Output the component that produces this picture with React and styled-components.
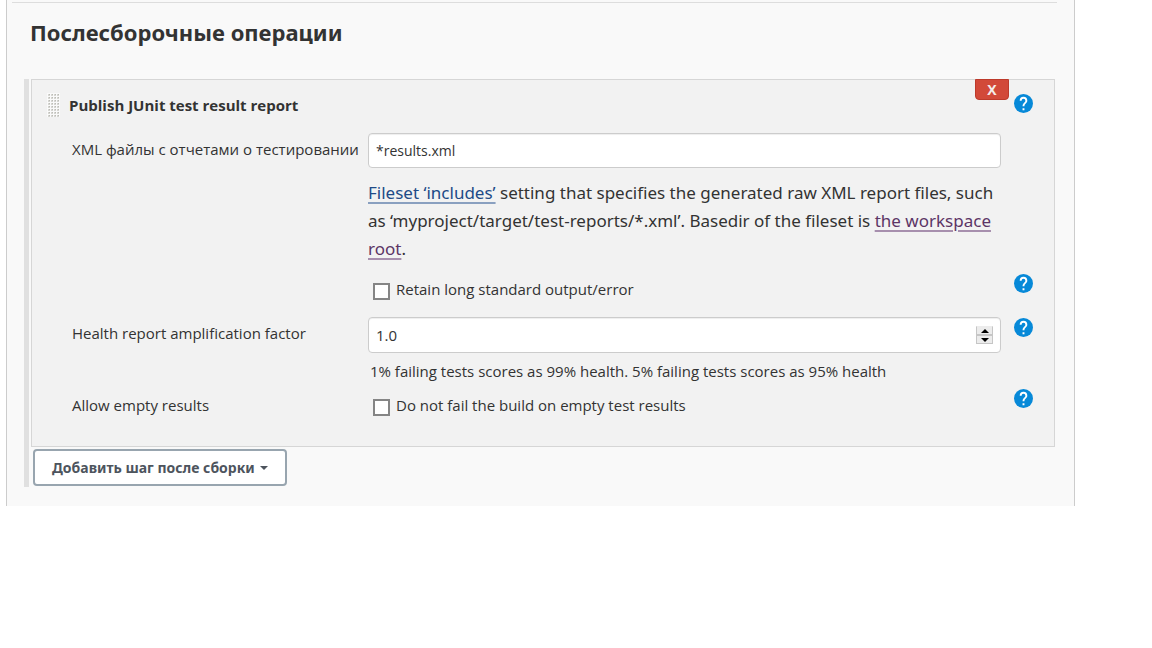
import React, { useRef } from "react";
import styled, { createGlobalStyle } from "styled-components";

const GlobalStyle = createGlobalStyle`
  *, *::before, *::after { box-sizing: border-box; }
  body {
    margin: 0;
    background: #fff;
    color: #333;
    font-family: "Open Sans", "Noto Sans", sans-serif;
    font-size: 15px;
    line-height: 24px;
  }
  button, input { font: inherit; color: inherit; }
`;

const Panel = styled.main`
  margin: 0 77px 0 6px;
  padding: 2px 17px 19px;
  background: #f9f9f9;
  border: solid #ccc;
  border-width: 0 1px;
`;

const Divider = styled.hr`
  margin: 0 0 0 -12px;
  border: 0;
  border-top: 1px solid #ddd;
`;

const SectionTitle = styled.h1`
  margin: 0;
  padding: 13px 6px 31px;
  font-family: "Noto Sans", sans-serif;
  font-size: 22px;
  line-height: 32px;
  font-weight: 700;
`;

const StepList = styled.section`
  margin-right: 2px;
  padding: 0 0 1px 2px;
  border-left: 5px solid #e0e0e0;
`;

const Step = styled.form`
  position: relative;
  padding-bottom: 29px;
  background: #f2f2f2;
  border: 1px solid #d6d6d6;
`;

const StepHeader = styled.header`
  display: flex;
  align-items: flex-start;
  height: 53px;
  padding: 13px 21px 0 15px;
`;

const Grip = styled.svg`
  display: block;
  flex: none;
`;

const StepTitle = styled.h2`
  flex: 1;
  margin: 0 0 0 9px;
  font-size: 15px;
  line-height: 24px;
  font-weight: 700;
`;

const DeleteButton = styled.button`
  position: absolute;
  top: -1px;
  right: 45px;
  width: 34px;
  height: 21px;
  padding: 0;
  background: #d24939;
  border: 1px solid #bd3a2b;
  border-radius: 0 0 4px 4px;
  color: #f5eceb;
  font-size: 14px;
  line-height: 18px;
  font-weight: 700;
`;

const Row = styled.div`
  display: grid;
  grid-template-columns: 296px minmax(0, 1fr) 19px;
  padding: 0 21px 0 40px;
`;

const RowLabel = styled.label`
  padding-top: 4px;
  white-space: nowrap;
`;

const Field = styled.div`
  min-width: 0;
  margin-right: 13px;
`;

const TextInput = styled.input`
  display: block;
  width: 100%;
  height: 35px;
  padding: 0 7px;
  background: #fff;
  border: 1px solid #ccc;
  border-radius: 4px;
  box-shadow: inset 0 1px 1px rgba(0, 0, 0, 0.07);
  outline: none;
  font-size: 14px;
`;

const NumberInput = styled(TextInput)`
  height: 36px;
  font-size: 15px;
  appearance: textfield;
  &::-webkit-inner-spin-button { appearance: none; margin: 0; }
`;

const NumberBox = styled.div`
  position: relative;
`;

const Stepper = styled.div`
  position: absolute;
  top: 9px;
  right: 8px;
  display: flex;
  flex-direction: column;
  width: 17px;
`;

const StepperButton = styled.button`
  display: flex;
  align-items: center;
  justify-content: center;
  height: 9px;
  padding: 0;
  background: #ececec;
  border: 1px solid #c6c6c6;
  svg { display: block; }
  &:first-child { border-top-color: #ececec; }
`;

const HelpText = styled.p`
  margin: 0;
  padding: 11px 0;
  font-family: "Noto Sans", sans-serif;
  font-size: 17px;
  line-height: 28px;
`;

const TextLink = styled.a`
  color: ${(p) => (p.$visited ? "#5c3566" : "#204a87")};
  text-decoration: underline 2px ${(p) => (p.$visited ? "#a78fae" : "#8aa0c0")};
  text-underline-offset: 3px;
`;

const Description = styled.p`
  margin: 0;
  padding: 6px 2px;
`;

const CheckLabel = styled.label`
  display: flex;
  align-items: flex-start;
  gap: 6px;
  padding: ${(p) => p.$top || 4}px 0 ${(p) => p.$bottom || 0}px 5px;
`;

const Checkbox = styled.input`
  appearance: none;
  width: 17px;
  height: 17px;
  margin: 6px 0 0;
  background: #fff;
  border: 2px solid #858585;
  &:checked { background: #0a84d6; }
`;

const HelpButton = styled.button`
  display: block;
  width: 19px;
  height: 19px;
  margin: ${(p) => p.$top || 0}px 0 0;
  padding: 0;
  background: none;
  border: 0;
  svg { display: block; }
`;

const AddButton = styled.button`
  display: flex;
  align-items: center;
  justify-content: center;
  gap: 5px;
  height: 37px;
  margin: 2px 0 0 2px;
  padding: 0 17px;
  background: #fff;
  border: 2px solid #98a5af;
  border-radius: 4px;
  color: #4d545d;
  font-family: "Noto Sans", sans-serif;
  font-size: 14px;
  font-weight: 700;
`;

function Help({ topic, top }) {
  return (
    <HelpButton type="button" aria-label={`Help: ${topic}`} $top={top}>
      <svg width="19" height="19" viewBox="2 2 20 20">
        <path
          fill="#0789d8"
          d="M12 2a10 10 0 1 0 0 20 10 10 0 0 0 0-20z"
        />
        <path
          fill="#fff"
          d="M13 19h-2v-2h2v2zm2.07-7.75-.9.92C13.45 12.9 13 13.5 13 15h-2v-.5c0-1.1.45-2.1 1.17-2.83l1.24-1.26c.37-.36.59-.86.59-1.41a2 2 0 0 0-4 0H8a4 4 0 0 1 8 0c0 .88-.36 1.68-.93 2.25z"
        />
      </svg>
    </HelpButton>
  );
}

function DragGrip() {
  const dots = [];
  for (let y = 1; y < 24; y += 3)
    for (let x = 1; x < 12; x += 3)
      dots.push(
        <g key={`${x}-${y}`}>
          <rect x={x} y={y} width="2" height="2" fill="#d6d6d2" />
          <rect x={x + 1} y={y} width="1" height="1" fill="#bcbcb6" />
        </g>
      );
  return (
    <Grip width="13" height="24" viewBox="0 0 13 24" aria-hidden="true">
      <rect width="13" height="24" fill="#fafafa" />
      {dots}
    </Grip>
  );
}

export default function App() {
  const factor = useRef(null);
  return (
    <>
      <GlobalStyle />
      <Panel>
        <Divider />
        <SectionTitle>Послесборочные операции</SectionTitle>
        <StepList>
          <Step onSubmit={(e) => e.preventDefault()}>
            <StepHeader>
              <DragGrip />
              <StepTitle>Publish JUnit test result report</StepTitle>
              <Help topic="Publish JUnit test result report" top={1} />
            </StepHeader>
            <DeleteButton type="button">X</DeleteButton>

            <Row>
              <RowLabel htmlFor="xml">XML файлы с отчетами о тестировании</RowLabel>
              <Field>
                <TextInput id="xml" type="text" defaultValue="*results.xml" />
                <HelpText>
                  <TextLink href="#includes">Fileset ‘includes’</TextLink> setting that
                  specifies the generated raw XML report files, such as
                  ‘myproject/target/test-reports/*.xml’. Basedir of the fileset is{" "}
                  <TextLink href="#workspace" $visited>the workspace root</TextLink>.
                </HelpText>
              </Field>
            </Row>

            <Row>
              <span />
              <Field>
                <CheckLabel $top={3} $bottom={16}>
                  <Checkbox type="checkbox" />
                  Retain long standard output/error
                </CheckLabel>
              </Field>
              <Help topic="Retain long standard output/error" />
            </Row>

            <Row>
              <RowLabel htmlFor="factor">Health report amplification factor</RowLabel>
              <Field>
                <NumberBox>
                  <NumberInput
                    id="factor"
                    ref={factor}
                    type="number"
                    step="0.1"
                    defaultValue="1.0"
                  />
                  <Stepper>
                    <StepperButton
                      type="button"
                      aria-label="Increase"
                      onClick={() => factor.current.stepUp()}
                    >
                      <svg width="8" height="4" viewBox="0 0 8 4"><path d="M0 4 4 0l4 4z" /></svg>
                    </StepperButton>
                    <StepperButton
                      type="button"
                      aria-label="Decrease"
                      onClick={() => factor.current.stepDown()}
                    >
                      <svg width="8" height="4" viewBox="0 0 8 4"><path d="M0 0h8L4 4z" /></svg>
                    </StepperButton>
                  </Stepper>
                </NumberBox>
                <Description>
                  1% failing tests scores as 99% health. 5% failing tests scores as 95% health
                </Description>
              </Field>
              <Help topic="Health report amplification factor" top={1} />
            </Row>

            <Row>
              <RowLabel htmlFor="empty">Allow empty results</RowLabel>
              <Field>
                <CheckLabel>
                  <Checkbox id="empty" type="checkbox" />
                  Do not fail the build on empty test results
                </CheckLabel>
              </Field>
              <Help topic="Allow empty results" />
            </Row>
          </Step>

          <AddButton type="button">
            Добавить шаг после сборки
            <svg width="8" height="4" viewBox="0 0 8 4" aria-hidden="true">
              <path fill="#4d545d" d="M0 0h8L4 4z" />
            </svg>
          </AddButton>
        </StepList>
      </Panel>
    </>
  );
}
